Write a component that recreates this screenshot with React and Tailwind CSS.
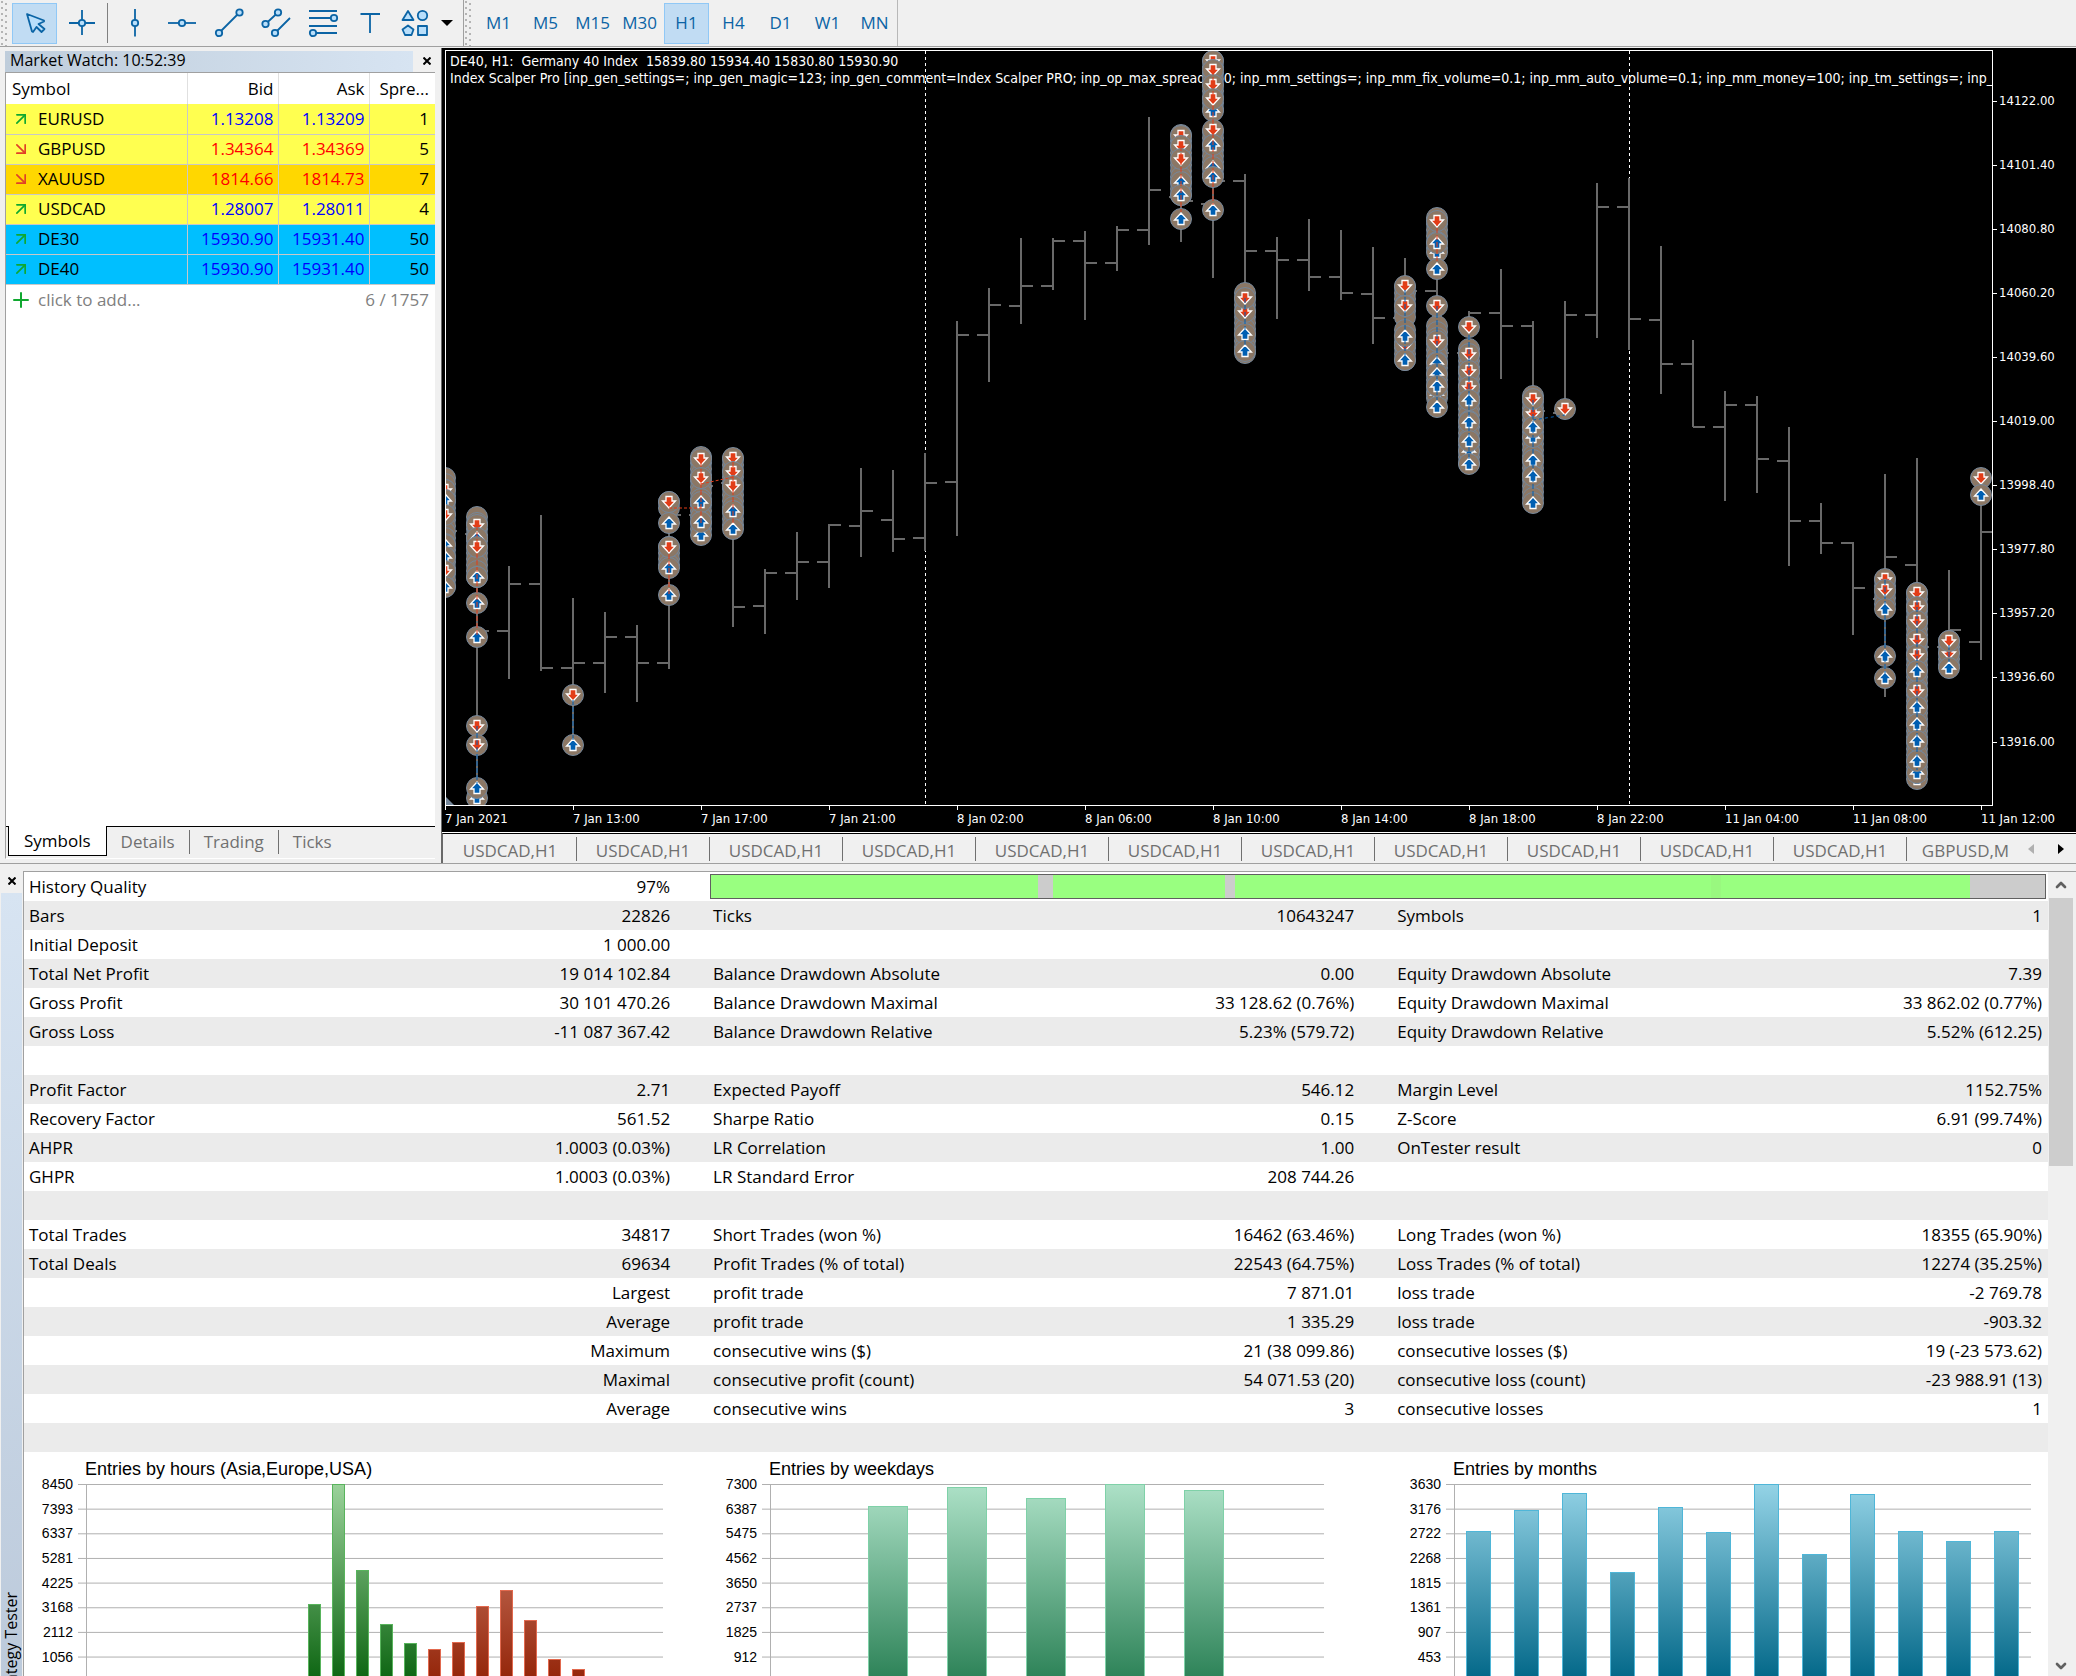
import React, { useState } from 'react';
import { ArrowDownRight, ArrowUpRight, ChevronDown, ChevronUp, Plus } from 'lucide-react';
import clsx from 'clsx';

const quotes = [
  { symbol: 'EURUSD', bid: '1.13208', ask: '1.13209', spread: 1, up: true, bg: 'bg-[#ffff50]' },
  { symbol: 'GBPUSD', bid: '1.34364', ask: '1.34369', spread: 5, up: false, bg: 'bg-[#ffff50]' },
  { symbol: 'XAUUSD', bid: '1814.66', ask: '1814.73', spread: 7, up: false, bg: 'bg-[#ffd700]' },
  { symbol: 'USDCAD', bid: '1.28007', ask: '1.28011', spread: 4, up: true, bg: 'bg-[#ffff50]' },
  { symbol: 'DE30', bid: '15930.90', ask: '15931.40', spread: 50, up: true, bg: 'bg-[#00bfff]' },
  { symbol: 'DE40', bid: '15930.90', ask: '15931.40', spread: 50, up: true, bg: 'bg-[#00bfff]' },
];

const timeframes = ['M1', 'M5', 'M15', 'M30', 'H1', 'H4', 'D1', 'W1', 'MN'];
const watchTabs = ['Symbols', 'Details', 'Trading', 'Ticks'];
const chartTabs = [...Array(11).fill('USDCAD,H1'), 'GBPUSD,M'];

const report = [
  ['Bars', '22826', 'Ticks', '10643247', 'Symbols', '1'],
  ['Initial Deposit', '1 000.00', '', '', '', ''],
  ['Total Net Profit', '19 014 102.84', 'Balance Drawdown Absolute', '0.00', 'Equity Drawdown Absolute', '7.39'],
  ['Gross Profit', '30 101 470.26', 'Balance Drawdown Maximal', '33 128.62 (0.76%)', 'Equity Drawdown Maximal', '33 862.02 (0.77%)'],
  ['Gross Loss', '-11 087 367.42', 'Balance Drawdown Relative', '5.23% (579.72)', 'Equity Drawdown Relative', '5.52% (612.25)'],
  ['', '', '', '', '', ''],
  ['Profit Factor', '2.71', 'Expected Payoff', '546.12', 'Margin Level', '1152.75%'],
  ['Recovery Factor', '561.52', 'Sharpe Ratio', '0.15', 'Z-Score', '6.91 (99.74%)'],
  ['AHPR', '1.0003 (0.03%)', 'LR Correlation', '1.00', 'OnTester result', '0'],
  ['GHPR', '1.0003 (0.03%)', 'LR Standard Error', '208 744.26', '', ''],
  ['', '', '', '', '', ''],
  ['Total Trades', '34817', 'Short Trades (won %)', '16462 (63.46%)', 'Long Trades (won %)', '18355 (65.90%)'],
  ['Total Deals', '69634', 'Profit Trades (% of total)', '22543 (64.75%)', 'Loss Trades (% of total)', '12274 (35.25%)'],
  ['', 'Largest', 'profit trade', '7 871.01', 'loss trade', '-2 769.78'],
  ['', 'Average', 'profit trade', '1 335.29', 'loss trade', '-903.32'],
  ['', 'Maximum', 'consecutive wins ($)', '21 (38 099.86)', 'consecutive losses ($)', '19 (-23 573.62)'],
  ['', 'Maximal', 'consecutive profit (count)', '54 071.53 (20)', 'consecutive loss (count)', '-23 988.91 (13)'],
  ['', 'Average', 'consecutive wins', '3', 'consecutive losses', '1'],
  ['', '', '', '', '', ''],
];

// [high, low, open, close] as chart y positions, one entry per hour
const bars = [
  [480, 590, 531, 531],
  [510, 804, 534, 631],
  [566, 679, 631, 584],
  [515, 671, 584, 668],
  [598, 739, 668, 663],
  [612, 693, 663, 637],
  [625, 702, 637, 663],
  [495, 669, 663, 515],
  [450, 540, 515, 486],
  [450, 627, 483, 607],
  [569, 634, 606, 573],
  [532, 600, 573, 562],
  [524, 588, 562, 525],
  [468, 557, 526, 511],
  [470, 552, 520, 539],
  [453, 551, 538, 483],
  [321, 536, 482, 335],
  [288, 382, 335, 305],
  [238, 324, 306, 286],
  [238, 290, 286, 241],
  [231, 320, 241, 263],
  [226, 271, 263, 230],
  [117, 245, 230, 190],
  [128, 242, 197, 201],
  [60, 278, 204, 181],
  [174, 350, 181, 251],
  [237, 319, 251, 260],
  [219, 291, 260, 277],
  [230, 300, 277, 293],
  [247, 344, 294, 318],
  [258, 360, 318, 291],
  [210, 410, 291, 353],
  [311, 465, 353, 313],
  [269, 379, 313, 326],
  [321, 505, 326, 411],
  [301, 410, 413, 315],
  [183, 338, 315, 207],
  [178, 350, 207, 319],
  [246, 394, 320, 364],
  [340, 427, 364, 427],
  [391, 501, 427, 405],
  [396, 493, 405, 459],
  [427, 566, 461, 521],
  [503, 554, 521, 543],
  [542, 635, 543, 588],
  [474, 697, 599, 557],
  [458, 780, 565, 647],
  [570, 675, 647, 630],
  [478, 660, 642, 532],
];

// rings: [from, to] runs of stacked deals; marks: direction and y, later ones on top
const deals = [
  { bar: 0, rings: [[478, 587]], marks: 'd490 u500 d515 u545 u557 d571 u587', lines: [['r', 490, 580]] },
  { bar: 1, rings: [[517, 582]], marks: 'd525 u538 d547 u577 u603 u637 d726 d745 u798 u788', lines: [['r', 525, 637], ['b', 726, 788]] },
  { bar: 4, rings: [], marks: 'd695 u745', lines: [['b', 700, 740]] },
  { bar: 7, rings: [[502, 508], [547, 568]], marks: 'd502 u523 d547 u568 u595', lines: [['r', 547, 595]] },
  { bar: 8, rings: [[457, 534]], marks: 'd459 d478 u502 u535 u522', lines: [['r', 462, 524]] },
  { bar: 9, rings: [[459, 529]], marks: 'd458 d472 d486 u511 u529', lines: [['r', 462, 525]] },
  { bar: 23, rings: [[135, 195]], marks: 'd136 d146 d159 u182 u195 u219', lines: [['r', 146, 212]] },
  { bar: 24, rings: [[61, 112], [132, 178]], marks: 'd61 d70 d85 u111 d99 d130 u167 u145 u177 u210', lines: [['r', 70, 205]] },
  { bar: 25, rings: [[293, 353]], marks: 'd312 d298 u334 u351', lines: [['b', 298, 345]] },
  { bar: 30, rings: [[287, 318], [330, 360]], marks: 'd286 d306 d345 u336 u360', lines: [['b', 290, 356]] },
  { bar: 31, rings: [[218, 252], [326, 400]], marks: 'd221 u252 u243 u269 d306 d341 u363 u374 u394 u386 u407', lines: [['r', 221, 262], ['b', 306, 400]] },
  { bar: 32, rings: [[349, 464]], marks: 'd327 d354 d371 d387 u400 u422 u451 u441 u464', lines: [['b', 335, 460]] },
  { bar: 34, rings: [[396, 503]], marks: 'd413 d399 u437 u427 u460 u476 u503', lines: [['b', 400, 500]] },
  { bar: 35, rings: [], marks: 'd409', lines: [] },
  { bar: 45, rings: [[580, 609]], marks: 'd579 d590 u609 u656 u678', lines: [['b', 580, 678]] },
  { bar: 46, rings: [[593, 778]], marks: 'd593 d607 d621 d640 d655 u671 d691 u707 u724 u741 u779 u773 u761', lines: [['b', 600, 770]] },
  { bar: 47, rings: [[641, 669]], marks: 'd653 d641 u668', lines: [['b', 645, 662]] },
  { bar: 48, rings: [], marks: 'd478 u495', lines: [] },
];

const timeLabels = [
  '7 Jan 2021', '7 Jan 13:00', '7 Jan 17:00', '7 Jan 21:00', '8 Jan 02:00', '8 Jan 06:00', '8 Jan 10:00',
  '8 Jan 14:00', '8 Jan 18:00', '8 Jan 22:00', '11 Jan 04:00', '11 Jan 08:00', '11 Jan 12:00',
];

const barX = (i) => 445 + i * 32;

const ToolIcon = ({ children }) => (
  <svg viewBox="0 0 32 32" className="w-8 h-8" fill="#b9dffb" stroke="#0b64a5" strokeWidth="1.8" strokeLinejoin="round">
    {children}
  </svg>
);

const tools = [
  { name: 'Cursor', icon: <path d="M8 7L25 13.5L25 14.5L19.5 17L25.5 22L22.5 25L17.5 20L14 25L13 24.5Z" /> },
  { name: 'Crosshair', icon: <><path d="M3 16H29M16 3V28" /><circle cx="16" cy="16" r="3.2" /></> },
  { name: 'Vertical Line', icon: <><path d="M16 2V29.500" /><circle cx="16" cy="16" r="3.2" /></> },
  { name: 'Horizontal Line', icon: <><path d="M2 16H30" /><circle cx="16" cy="16" r="3.2" /></> },
  { name: 'Trendline', icon: <><path d="M6 26L26.500 5.500" /><circle cx="6" cy="26" r="3.2" /><circle cx="26.500" cy="5.500" r="3.2" /></> },
  { name: 'Channel', icon: <><path d="M5.500 17L18 5.500M15 26L30 11" /><circle cx="18" cy="5.500" r="3.2" /><circle cx="5.500" cy="17" r="3.2" /><circle cx="15" cy="26" r="3.2" /></> },
  { name: 'Fibonacci', icon: <><path d="M2 4H30M2 11H27M2 19H30M6 26H30" /><circle cx="27" cy="11" r="3.2" /><circle cx="6" cy="26" r="3.2" /></> },
  { name: 'Text', icon: <path d="M6.500 7H26M16 7V26" /> },
  { name: 'Shapes', icon: <><path d="M7 4L12.500 13H1.500Z" /><circle cx="21.500" cy="8.500" r="4.700" /><path d="M7 18.500L12.500 22.500L10.500 28H4L1.500 22.500Z" /><rect x="17" y="19" width="9" height="9" /></> },
];

const Grip = () => (
  <svg viewBox="0 0 12 46" className="w-3 h-[46px] shrink-0" fill="#b4b4b4">
    {Array.from({ length: 8 }, (_, i) => (
      <React.Fragment key={i}>
        <rect x="1" y={i * 6 + 1} width="2" height="2" />
        <rect x="5" y={i * 6 + 3} width="2" height="2" />
      </React.Fragment>
    ))}
  </svg>
);

const Toolbar = ({ timeframe, onTimeframe }) => (
  <header className="flex items-center h-[47px] border-b border-[#a0a0a0]">
    <Grip />
    <div className="flex items-center gap-0.5 pr-2.5 h-full border-r border-[#a0a0a0]">
      {tools.map((tool, i) => (
        <React.Fragment key={tool.name}>
          <button
            aria-label={tool.name}
            className={clsx(
              'flex items-center justify-center w-[45px] h-[41px] border',
              i === 0 ? 'bg-[#c1dcf3] border-[#90c8f6]' : 'border-transparent'
            )}
          >
            <ToolIcon>{tool.icon}</ToolIcon>
          </button>
          {i === 1 && <div className="w-px h-10 ml-px mr-0.5 bg-[#808080]" />}
        </React.Fragment>
      ))}
      <button aria-label="More shapes">
        <svg viewBox="0 0 12 8" className="w-3 h-2"><path d="M0 1H12L6 7Z" /></svg>
      </button>
    </div>
    <Grip />
    <div className="flex items-center gap-0.5 h-full border-r border-[#b8b8b8]">
      {timeframes.map((tf) => (
        <button
          key={tf}
          onClick={() => onTimeframe(tf)}
          className={clsx(
            'w-[45px] h-[41px] border text-[17px] text-[#0b64a5]',
            tf === timeframe ? 'bg-[#c1dcf3] border-[#90c8f6]' : 'border-transparent'
          )}
        >
          {tf}
        </button>
      ))}
    </div>
  </header>
);

const CloseButton = () => (
  <button aria-label="Close" className="flex items-center justify-center w-4 h-5">
    <svg viewBox="0 0 8 8" className="w-2 h-2" stroke="#000" strokeWidth="2"><path d="M0.500 0.500L7.500 7.500M7.500 0.500L0.500 7.500" /></svg>
  </button>
);

const MarketWatch = () => {
  const [tab, setTab] = useState('Symbols');

  return (
    <aside className="flex flex-col w-[441px] shrink-0 pl-[5px] pr-1.5 pt-0.5 pb-1">
      <div className="flex items-center h-[22px]">
        <h2 className="flex-1 h-[21px] pl-[5px] text-base leading-[18px] text-black bg-gradient-to-r from-[#bfcddb] to-[#d7e4f2]">
          Market Watch: 10:52:39
        </h2>
        <div className="flex justify-end w-[22px]"><CloseButton /></div>
      </div>

      <div className="flex-1 bg-white border-t border-l border-[#a0a0a0]">
        <table className="w-full table-fixed border-collapse text-[17px]">
          <colgroup>
            <col />
            <col className="w-[91px]" />
            <col className="w-[91px]" />
            <col className="w-[66px]" />
          </colgroup>
          <thead>
            <tr className="h-[31px]">
              <th className="pl-1.5 text-left font-normal border-r border-[#e0e0e0]">Symbol</th>
              <th className="pr-1 text-right font-normal border-r border-[#e0e0e0]">Bid</th>
              <th className="pr-1 text-right font-normal border-r border-[#e0e0e0]">Ask</th>
              <th className="pr-1.5 text-right font-normal">Spre...</th>
            </tr>
          </thead>
          <tbody>
            {quotes.map((q) => (
              <tr key={q.symbol} className={clsx('h-[30px] border-b border-[#c8c8c8]', q.bg)}>
                <td className="pl-[5px] border-r border-[#c8c8c8]">
                  <span className="flex items-center gap-[7px]">
                    {q.up
                      ? <ArrowUpRight className="w-5 h-5 text-[#10a830]" strokeWidth={2} />
                      : <ArrowDownRight className="w-5 h-5 text-[#e04028]" strokeWidth={2} />}
                    {q.symbol}
                  </span>
                </td>
                <td className={clsx('pr-1 text-right border-r border-[#c8c8c8]', q.up ? 'text-[#0000ff]' : 'text-[#ff0000]')}>{q.bid}</td>
                <td className={clsx('pr-1 text-right border-r border-[#c8c8c8]', q.up ? 'text-[#0000ff]' : 'text-[#ff0000]')}>{q.ask}</td>
                <td className="pr-1.5 text-right">{q.spread}</td>
              </tr>
            ))}
          </tbody>
        </table>
        <div className="flex items-center justify-between h-[30px] pl-[3px] pr-1.5 text-[17px] text-[#808080]">
          <button className="flex items-center gap-[5px]">
            <Plus className="w-6 h-6 text-[#10a830]" strokeWidth={2} />
            click to add...
          </button>
          <span>6 / 1757</span>
        </div>
      </div>

      <div className="flex items-start h-[33px] border-l border-b border-l-[#a0a0a0] border-b-white">
        <div className="w-0.5 border-t border-black" />
        {watchTabs.map((name, i) => (
          <button
            key={name}
            onClick={() => setTab(name)}
            className={clsx(
              'h-[30px] text-[17px]',
              name === tab
                ? 'px-[15px] bg-white text-black border-l border-r border-b border-black'
                : 'flex items-center border-t border-black text-[#707070]'
            )}
          >
            {name === tab ? name : (
              <span className={clsx('px-[14px] leading-6', i < watchTabs.length - 1 && 'border-r border-[#707070]')}>{name}</span>
            )}
          </button>
        ))}
        <div className="flex-1 border-t border-black" />
      </div>
    </aside>
  );
};

const DealMark = ({ x, y, dir }) => (
  <g transform={`translate(${x} ${y})`}>
    <circle r="10.5" fill="#8b7765" stroke="#75879a" />
    <path
      d={dir === 'd' ? 'M-3 -5.500H3V-1H6.500L0 6L-6.500 -1H-3Z' : 'M-3 5.500H3V1H6.500L0 -6L-6.500 1H-3Z'}
      fill={dir === 'd' ? '#e23d18' : '#005fb2'}
      stroke="#fff"
      strokeWidth="1.300"
    />
  </g>
);

const PriceChart = () => (
  <svg
    viewBox="442 48 1634 784"
    className="block w-full h-auto bg-black"
    fontFamily="'DejaVu Sans Condensed', 'DejaVu Sans', sans-serif"
    fontSize="13"
    fill="#fff"
  >
    <defs>
      <clipPath id="plot"><rect x="446" y="51" width="1546" height="754" /></clipPath>
    </defs>

    {/* Day separators */}
    <path d="M925.500 51V805M1629.500 51V805" stroke="#fff" strokeDasharray="3 3" />

    <g clipPath="url(#plot)">
      {bars.map(([high, low, open, close], i) => (
        <path
          key={i}
          d={`M${barX(i)} ${high}V${low}M${barX(i) - 12} ${open}H${barX(i)}M${barX(i)} ${close}H${barX(i) + 12}`}
          stroke="#696969"
          strokeWidth="2"
        />
      ))}

      <text x="450" y="66" fontSize="14" xmlSpace="preserve">DE40, H1:  Germany 40 Index  15839.80 15934.40 15830.80 15930.90</text>
      <text x="450" y="83" fontSize="14">
        Index Scalper Pro [inp_gen_settings=; inp_gen_magic=123; inp_gen_comment=Index Scalper PRO; inp_op_max_spread=50; inp_mm_settings=; inp_mm_fix_volume=0.1; inp_mm_auto_volume=0.1; inp_mm_money=100; inp_tm_settings=; inp_t
      </text>

      {deals.map(({ bar, rings, marks, lines }) => {
        const x = barX(bar);
        return (
          <g key={bar}>
            {rings.flatMap(([from, to]) =>
              Array.from({ length: Math.floor((to - from) / 6) + 1 }, (_, i) => (
                <circle key={`${from}-${i}`} cx={x} cy={from + i * 6} r="10.5" fill="#8b7765" stroke="#75879a" />
              ))
            )}
            {marks.split(' ').map((m) => (
              <DealMark key={m} x={x} y={Number(m.slice(1))} dir={m[0]} />
            ))}
            {lines.map(([color, from, to]) => (
              <path
                key={color}
                d={`M${x} ${from}V${to}`}
                stroke={color === 'r' ? '#e23d18' : '#005fb2'}
                strokeDasharray="5 2"
              />
            ))}
          </g>
        );
      })}

      <path d="M669 508H701M701 484L733 477" stroke="#e23d18" strokeDasharray="3 2" fill="none" />
      <path d="M1533 420L1565 415" stroke="#005fb2" strokeDasharray="3 3" fill="none" />
      <path d="M445 796L455 806H445Z" fill="#75879a" />
    </g>

    <rect x="445.500" y="50.500" width="1547" height="755" fill="none" stroke="#fff" />

    {/* Price axis */}
    {Array.from({ length: 11 }, (_, i) => {
      const y = Math.round(100.5 + i * 64.1);
      return (
        <g key={i}>
          <rect x="1993" y={y} width="4" height="1" />
          <text x="1999" y={y + 4}>{(14122 - i * 20.6).toFixed(2)}</text>
        </g>
      );
    })}

    {/* Time axis */}
    {timeLabels.map((label, i) => (
      <g key={label}>
        <rect x={445 + i * 128} y="806" width="1" height="4" />
        <text x={445 + i * 128} y="823">{label}</text>
      </g>
    ))}
  </svg>
);

const ChartTabs = () => (
  <div className="border-t border-white">
    <nav className="flex items-center h-[30px] border-t border-t-black border-l border-l-[#696969] pl-px">
      <div className="flex flex-1 min-w-0 overflow-hidden">
        {chartTabs.map((name, i) => (
          <button
            key={i}
            className={clsx(
              'w-[133px] h-6 shrink-0 pt-0.5 text-[17px] leading-6 text-[#707070]',
              i < chartTabs.length - 1 ? 'border-r border-[#707070]' : 'pr-4'
            )}
          >
            {name}
          </button>
        ))}
      </div>
      <button aria-label="Scroll left" className="px-3">
        <svg viewBox="0 0 6 10" className="w-1.5 h-2.5" fill="#b0b0b0"><path d="M6 0V10L0 5Z" /></svg>
      </button>
      <button aria-label="Scroll right" className="px-3">
        <svg viewBox="0 0 6 10" className="w-1.5 h-2.5"><path d="M0 0V10L6 5Z" /></svg>
      </button>
    </nav>
  </div>
);

const HistoryQuality = () => (
  <div className="flex h-[25px] border border-[#606060] bg-[#cccccc]">
    <div className="w-[24.5%] bg-[#99ff80]" />
    <div className="w-[1.1%]" />
    <div className="w-[12.9%] bg-[#99ff80]" />
    <div className="w-[0.8%]" />
    <div className="w-[35.7%] bg-[#99ff80]" />
    <div className="w-[0.7%] bg-[#99f87f]" />
    <div className="w-[18.7%] bg-[#99ff80]" />
  </div>
);

const Report = () => (
  <table className="w-full table-fixed border-collapse text-[17px] leading-7 whitespace-nowrap">
    <colgroup>
      <col className="w-[17%]" />
      <col className="w-[16.8%]" />
      <col className="w-[17%]" />
      <col className="w-[16.8%]" />
      <col className="w-[17%]" />
      <col />
    </colgroup>
    <tbody>
      <tr className="h-[29px]">
        <th className="pt-px pl-[5px] text-left font-normal">History Quality</th>
        <td className="pt-px pr-[38px] text-right">97%</td>
        <td colSpan={4} className="pl-0.5 pr-0.5"><HistoryQuality /></td>
      </tr>
      {report.map((row, r) => (
        <tr key={r} className={clsx('h-[29px]', r % 2 === 0 && 'bg-[#ebebeb]')}>
          {row.map((cell, c) =>
            c % 2 === 0 ? (
              <th key={c} className="pt-px pl-[5px] text-left font-normal">{cell}</th>
            ) : (
              <td key={c} className={clsx('pt-px text-right', c === 5 ? 'pr-1.5' : 'pr-[38px]')}>{cell}</td>
            )
          )}
        </tr>
      ))}
    </tbody>
  </table>
);

const BarChart = ({ id, title, max, right, labels, width, colors, columns }) => (
  <svg className="block w-full h-[260px]" fontFamily="'Liberation Sans', Arial, sans-serif">
    <defs>
      {colors.map(([top, bottom], i) => (
        <linearGradient key={i} id={`${id}${i}`} gradientUnits="userSpaceOnUse" x1="0" y1="32" x2="0" y2="230">
          <stop offset="0" stopColor={top} />
          <stop offset="1" stopColor={bottom} />
        </linearGradient>
      ))}
    </defs>
    <text x="61" y="23" fontSize="18">{title}</text>
    {labels.map((label, i) => {
      const y = 32 + i * 24.65;
      return (
        <g key={label}>
          <path d={`M54 ${y + 0.5}H${right}`} stroke="#b0b0b0" />
          <text x="49" y={Math.round(y) + 5} fontSize="14" textAnchor="end">{label}</text>
        </g>
      );
    })}
    <path d="M62.500 32V230" stroke="#b0b0b0" />
    {columns.map(([x, y, c = 0]) => (
      <rect key={x} x={x + 0.5} y={y + 0.5} width={width - 1} height={230 - y} fill={`url(#${id}${c})`} stroke={colors[c][2]} />
    ))}
  </svg>
);

const EntryCharts = () => (
  <div className="grid grid-cols-[684fr_684fr_656fr]">
    <BarChart
      id="hours"
      title="Entries by hours (Asia,Europe,USA)"
      labels={[8450, 7393, 6337, 5281, 4225, 3168, 2112, 1056]}
      right={639}
      width={13}
      colors={[['#9bd29b', '#0b6410', '#58b45c'], ['#d98f7c', '#932408', '#e2694e']]}
      columns={[
        [284, 152], [308, 32], [332, 118], [356, 172], [380, 191],
        [404, 197, 1], [428, 190, 1], [452, 154, 1], [476, 138, 1], [500, 168, 1], [524, 207, 1], [548, 217, 1],
      ]}
    />
    <BarChart
      id="weekdays"
      title="Entries by weekdays"
      labels={[7300, 6387, 5475, 4562, 3650, 2737, 1825, 912]}
      right={616}
      width={40}
      colors={[['#ade1c7', '#2b8156', '#7fd1a8']]}
      columns={[[160, 54], [239, 35], [318, 46], [397, 32], [476, 38]]}
    />
    <BarChart
      id="months"
      title="Entries by months"
      labels={[3630, 3176, 2722, 2268, 1815, 1361, 907, 453]}
      right={639}
      width={25}
      colors={[['#94d3e6', '#006687', '#4fb6d8']]}
      columns={[
        [74, 79], [122, 58], [170, 41], [218, 120], [266, 55], [314, 80],
        [362, 32], [410, 102], [458, 42], [506, 79], [554, 89], [602, 79],
      ]}
    />
  </div>
);

const StrategyTester = () => (
  <section className="flex flex-1 min-h-0 pt-[7px]">
    <div className="flex flex-col items-center w-[23px] shrink-0 px-px">
      <CloseButton />
      <div className="flex flex-col flex-1 items-start justify-end w-full min-h-0 mt-0.5 overflow-hidden bg-gradient-to-b from-[#d7e4f2] to-[#bccadb]">
        <h2 className="-mb-7 shrink-0 text-base leading-5 rotate-180 [writing-mode:vertical-rl]">Strategy Tester</h2>
      </div>
    </div>
    <div className="flex flex-1 min-w-0 border-t border-l border-[#a0a0a0] bg-white">
      <div className="flex-1 min-w-0 overflow-hidden">
        <Report />
        <EntryCharts />
      </div>
      <div className="flex flex-col items-center w-7 shrink-0 pl-px pr-[3px] bg-[#f0f0f0]">
        <button aria-label="Scroll up" className="py-[5px]"><ChevronUp className="w-4 h-4 text-[#606060]" strokeWidth={4} /></button>
        <div className="w-full h-[268px] bg-[#cdcdcd]" />
        <button aria-label="Scroll down" className="mt-auto py-0.5"><ChevronDown className="w-4 h-4 text-[#606060]" strokeWidth={4} /></button>
      </div>
    </div>
  </section>
);

export default function App() {
  const [timeframe, setTimeframe] = useState('H1');

  return (
    <div className="flex flex-col h-screen overflow-hidden bg-[#f0f0f0] text-black font-['Open_Sans','Noto_Sans',sans-serif]">
      <Toolbar timeframe={timeframe} onTimeframe={setTimeframe} />
      <main className="flex pt-px border-b border-[#a0a0a0] shrink-0">
        <MarketWatch />
        <div className="flex-1 min-w-0 border-l border-[#696969]">
          <PriceChart />
          <ChartTabs />
        </div>
      </main>
      <StrategyTester />
    </div>
  );
}
